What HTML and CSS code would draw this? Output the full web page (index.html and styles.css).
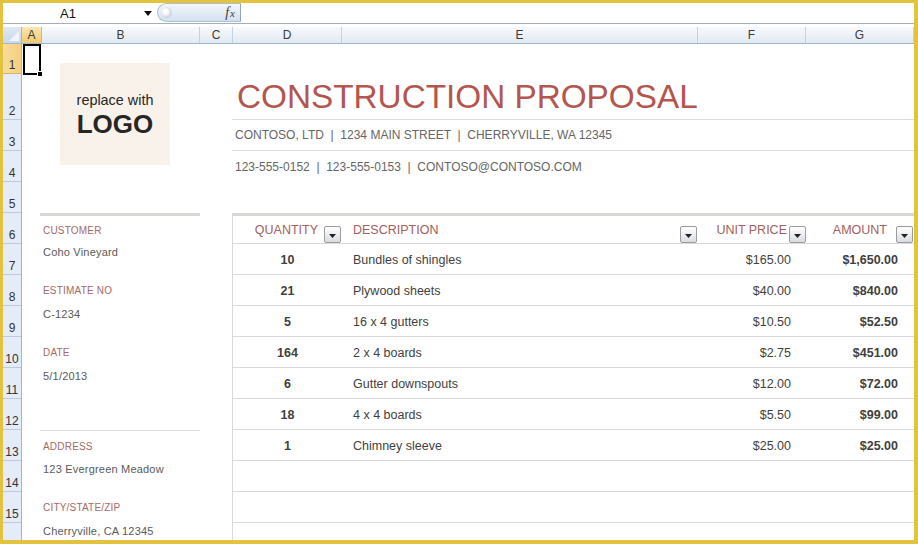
FILE: index.html
```html
<!DOCTYPE html>
<html>
<head>
<meta charset="utf-8">
<link rel="stylesheet" href="styles.css">
</head>
<body>
<div class="frame">
  <div class="fbar">
    <div class="namebox">
      <span class="nb-text">A1</span>
      <svg class="nb-arrow" width="8" height="5" viewBox="0 0 8 5"><path d="M0 0H8L4 5Z" fill="#111"/></svg>
    </div>
    <div class="fxcap">
      <span class="bubble"></span>
      <span class="fx"><i>f</i><i class="fx-x">x</i></span>
    </div>
    <div class="finput"></div>
  </div>

  <div class="sheet">
    <div class="corner">
      <svg class="corner-tri" width="10" height="10" viewBox="0 0 10 10"><path d="M10 0V10H0Z" fill="#f1f5fb"/></svg>
    </div>
    <div class="colheads">
      <div class="ch sel w-a">A</div>
      <div class="ch w-b">B</div>
      <div class="ch w-c">C</div>
      <div class="ch w-d">D</div>
      <div class="ch w-e">E</div>
      <div class="ch w-f">F</div>
      <div class="ch w-g">G</div>
    </div>
    <div class="rowheads">
      <div class="rh sel h30">1</div>
      <div class="rh h46">2</div>
      <div class="rh">3</div>
      <div class="rh">4</div>
      <div class="rh">5</div>
      <div class="rh">6</div>
      <div class="rh">7</div>
      <div class="rh">8</div>
      <div class="rh">9</div>
      <div class="rh">10</div>
      <div class="rh">11</div>
      <div class="rh">12</div>
      <div class="rh">13</div>
      <div class="rh">14</div>
      <div class="rh">15</div>
      <div class="rh"></div>
    </div>

    <div class="body">
      <div class="cursor"><span class="handle"></span></div>

      <div class="logo">
        <span class="logo-small">replace with</span>
        <span class="logo-big">LOGO</span>
      </div>

      <div class="title">CONSTRUCTION PROPOSAL</div>
      <div class="contact r3">CONTOSO, LTD  |  1234 MAIN STREET  |  CHERRYVILLE, WA 12345</div>
      <div class="contact r4">123-555-0152  |  123-555-0153  |  CONTOSO@CONTOSO.COM</div>

      <div class="info">
        <div class="lbl first">CUSTOMER</div>
        <div class="val">Coho Vineyard</div>
        <div class="lbl">ESTIMATE NO</div>
        <div class="val">C-1234</div>
        <div class="lbl">DATE</div>
        <div class="val">5/1/2013</div>
        <div class="val"></div>
        <div class="lbl sep">ADDRESS</div>
        <div class="val">123 Evergreen Meadow</div>
        <div class="lbl">CITY/STATE/ZIP</div>
        <div class="val">Cherryville, CA 12345</div>
      </div>

      <div class="tbl">
        <div class="tr thead">
          <div class="th q"><span>QUANTITY</span><span class="dd"><svg width="7" height="4" viewBox="0 0 7 4"><path d="M0 0H7L3.5 4Z" fill="#222"/></svg></span></div>
          <div class="th d"><span>DESCRIPTION</span><span class="dd"><svg width="7" height="4" viewBox="0 0 7 4"><path d="M0 0H7L3.5 4Z" fill="#222"/></svg></span></div>
          <div class="th u"><span>UNIT PRICE</span><span class="dd"><svg width="7" height="4" viewBox="0 0 7 4"><path d="M0 0H7L3.5 4Z" fill="#222"/></svg></span></div>
          <div class="th a"><span>AMOUNT</span><span class="dd"><svg width="7" height="4" viewBox="0 0 7 4"><path d="M0 0H7L3.5 4Z" fill="#222"/></svg></span></div>
        </div>
        <div class="tr"><div class="td c-q">10</div><div class="td c-d">Bundles of shingles</div><div class="td c-u">$165.00</div><div class="td c-a">$1,650.00</div></div>
        <div class="tr"><div class="td c-q">21</div><div class="td c-d">Plywood sheets</div><div class="td c-u">$40.00</div><div class="td c-a">$840.00</div></div>
        <div class="tr"><div class="td c-q">5</div><div class="td c-d">16 x 4 gutters</div><div class="td c-u">$10.50</div><div class="td c-a">$52.50</div></div>
        <div class="tr"><div class="td c-q">164</div><div class="td c-d">2 x 4 boards</div><div class="td c-u">$2.75</div><div class="td c-a">$451.00</div></div>
        <div class="tr"><div class="td c-q">6</div><div class="td c-d">Gutter downspouts</div><div class="td c-u">$12.00</div><div class="td c-a">$72.00</div></div>
        <div class="tr"><div class="td c-q">18</div><div class="td c-d">4 x 4 boards</div><div class="td c-u">$5.50</div><div class="td c-a">$99.00</div></div>
        <div class="tr"><div class="td c-q">1</div><div class="td c-d">Chimney sleeve</div><div class="td c-u">$25.00</div><div class="td c-a">$25.00</div></div>
        <div class="tr"><div class="td"></div><div class="td"></div><div class="td"></div><div class="td"></div></div>
        <div class="tr"><div class="td"></div><div class="td"></div><div class="td"></div><div class="td"></div></div>
        <div class="tr"><div class="td"></div><div class="td"></div><div class="td"></div><div class="td"></div></div>
      </div>
    </div>
  </div>
</div>
</body>
</html>
```

FILE: styles.css
```css
* { box-sizing: border-box; }

body {
  margin: 0;
  font-family: "Liberation Sans", Arial, sans-serif;
  background: #fff;
}

.frame {
  width: 918px;
  height: 544px;
  border-style: solid;
  border-color: #e2c23e;
  border-width: 3px 4px 4px 3px;
  background: #fff;
  overflow: hidden;
  display: flex;
  flex-direction: column;
}

/* formula bar */
.fbar {
  height: 21px;
  flex-shrink: 0;
  display: flex;
  border-bottom: 1px solid #a5afbb;
  margin-bottom: 3px;
  background: #fff;
}

.namebox {
  width: 154px;
  display: flex;
  align-items: center;
  padding-left: 57px;
  padding-right: 5px;
}

.nb-text {
  font-size: 13px;
  color: #111;
}

.nb-arrow {
  margin-left: auto;
  margin-top: 1px;
}

.fxcap {
  width: 84px;
  height: 19px;
  border: 1px solid #aebfd5;
  border-right-color: #8fa3bd;
  border-radius: 10px 0 0 10px;
  background: linear-gradient(#f3f7fc, #d4e0ef);
  display: flex;
  align-items: center;
  justify-content: space-between;
  padding: 0 5px 0 3px;
}

.bubble {
  width: 11px;
  height: 11px;
  border-radius: 50%;
  background: radial-gradient(circle at 40% 40%, #ffffff 20%, #c9d3df 70%, #aab7c7 100%);
}

.fx {
  font-family: "Liberation Serif", serif;
  font-size: 14px;
  line-height: 14px;
  color: #3d3d3d;
  white-space: nowrap;
}

.fx-x {
  font-size: 11px;
  margin-left: 1px;
}

.finput {
  flex: 1;
}

/* sheet */
.sheet {
  flex: 1;
  min-height: 0;
  display: grid;
  grid-template-columns: 19px 1fr;
  grid-template-rows: 17px 1fr;
  overflow: hidden;
}

.corner {
  position: relative;
  background: linear-gradient(#dfe8f3, #c9d8ea);
  border-right: 1px solid #9eb6ce;
  border-bottom: 1px solid #9eb6ce;
}

.corner-tri {
  position: absolute;
  right: 2px;
  bottom: 2px;
}

.colheads {
  display: flex;
  background: linear-gradient(#f8fafd, #e1e9f3);
  border-bottom: 1px solid #9eb6ce;
}

.ch {
  flex-shrink: 0;
  display: flex;
  align-items: center;
  justify-content: center;
  font-size: 12px;
  color: #3a3a3a;
  border-right: 1px solid #c3d1e2;
}

.ch.sel {
  background: linear-gradient(#fbe6b3, #f4c96e);
  border-right-color: #deb25e;
}

.w-a { width: 20px; }
.w-b { width: 158px; }
.w-c { width: 33px; }
.w-d { width: 109px; }
.w-e { width: 356px; }
.w-f { width: 108px; }
.w-g { width: 108px; }

.rowheads {
  display: flex;
  flex-direction: column;
  background: #e4ecf7;
  border-right: 1px solid #9eb6ce;
}

.rh {
  flex-shrink: 0;
  height: 31px;
  display: flex;
  align-items: flex-end;
  justify-content: center;
  padding-bottom: 2px;
  font-size: 12px;
  line-height: 12px;
  color: #333;
  border-bottom: 1px solid #bccadb;
}

.rh.h30 { height: 30px; }
.rh.h46 { height: 46px; }

.rh.sel {
  background: linear-gradient(90deg, #f9dc9a, #f5cf7c);
  border-bottom-color: #deb25e;
}

/* body grid */
.body {
  display: grid;
  grid-template-columns: 20px 158px 33px 109px 356px 108px 108px;
  grid-template-rows: 30px 46px 31px 31px 31px;
  grid-auto-rows: 31px;
  align-content: start;
}

.cursor {
  grid-column: 1;
  grid-row: 1;
  position: relative;
  margin: 0 1px -1px 1px;
  border: 2px solid #000;
}

.handle {
  position: absolute;
  right: -4px;
  bottom: -4px;
  width: 6px;
  height: 6px;
  background: #000;
  border: 1px solid #fff;
}

.logo {
  grid-column: 2;
  grid-row: 1 / 5;
  align-self: start;
  justify-self: start;
  margin: 19px 0 0 18px;
  width: 110px;
  height: 102px;
  background: #f9f2ea;
  display: flex;
  flex-direction: column;
  align-items: center;
  justify-content: center;
  color: #262626;
}

.logo-small {
  font-size: 14.4px;
  line-height: 16px;
  margin-bottom: 3px;
}

.logo-big {
  font-size: 26px;
  line-height: 26px;
  font-weight: bold;
}

.title {
  grid-column: 4 / 8;
  grid-row: 2;
  margin-left: -1px;
  padding-left: 5px;
  padding-bottom: 6px;
  display: flex;
  align-items: flex-end;
  font-size: 33.3px;
  line-height: 33px;
  color: #b35650;
  border-bottom: 1px solid #dcdcdc;
}

.contact {
  grid-column: 4 / 8;
  margin-left: -1px;
  padding-left: 3px;
  display: flex;
  align-items: center;
  font-size: 12px;
  color: #666;
  white-space: pre;
}

.contact.r3 {
  grid-row: 3;
  border-bottom: 1px solid #dcdcdc;
}

.contact.r4 {
  grid-row: 4;
}

/* left info panel */
.info {
  grid-column: 2;
  grid-row: 6 / 17;
  margin-left: -2px;
  display: flex;
  flex-direction: column;
}

.info > div {
  height: 31px;
  flex-shrink: 0;
  display: flex;
  padding-left: 3px;
}

.lbl {
  align-items: center;
  font-size: 10px;
  color: #a46a66;
  letter-spacing: 0.2px;
}

.val {
  align-items: flex-start;
  font-size: 11px;
  line-height: 16px;
  color: #5a5a5a;
  letter-spacing: 0.2px;
}

.lbl.first {
  border-top: 3px solid #d7d7d3;
}

.lbl.sep {
  border-top: 1px solid #dcdcdc;
}

/* table */
.tbl {
  grid-column: 4 / 8;
  grid-row: 6 / 17;
  margin-left: -1px;
  border-left: 1px solid #d9d9d9;
  display: flex;
  flex-direction: column;
}

.tr {
  flex-shrink: 0;
  height: 31px;
  display: grid;
  grid-template-columns: 109px 356px 108px 108px;
  border-bottom: 1px solid #dadada;
}

.thead {
  border-top: 3px solid #d8d8d3;
}

.th {
  display: flex;
  align-items: center;
  font-size: 12.5px;
  color: #a4605c;
}

.th.q { justify-content: flex-end; gap: 6px; padding-right: 1px; }
.th.d { justify-content: space-between; padding-left: 11px; padding-right: 1px; }
.th.u { justify-content: flex-end; gap: 2px; }
.th.a { justify-content: flex-end; gap: 9px; padding-right: 1px; }

.dd {
  align-self: flex-end;
  width: 17px;
  height: 17px;
  border: 1px solid #9c9c9c;
  border-radius: 2px;
  background: linear-gradient(#ffffff, #d9dce1);
  display: flex;
  align-items: center;
  justify-content: center;
  padding-top: 2px;
}

.td {
  display: flex;
  align-items: center;
  padding-top: 1px;
  font-size: 12.5px;
  color: #3f3f3f;
}

.c-q { justify-content: center; font-weight: bold; }
.c-d { padding-left: 11px; }
.c-u { justify-content: flex-end; padding-right: 15px; }
.c-a { justify-content: flex-end; padding-right: 16px; font-weight: bold; }
```
